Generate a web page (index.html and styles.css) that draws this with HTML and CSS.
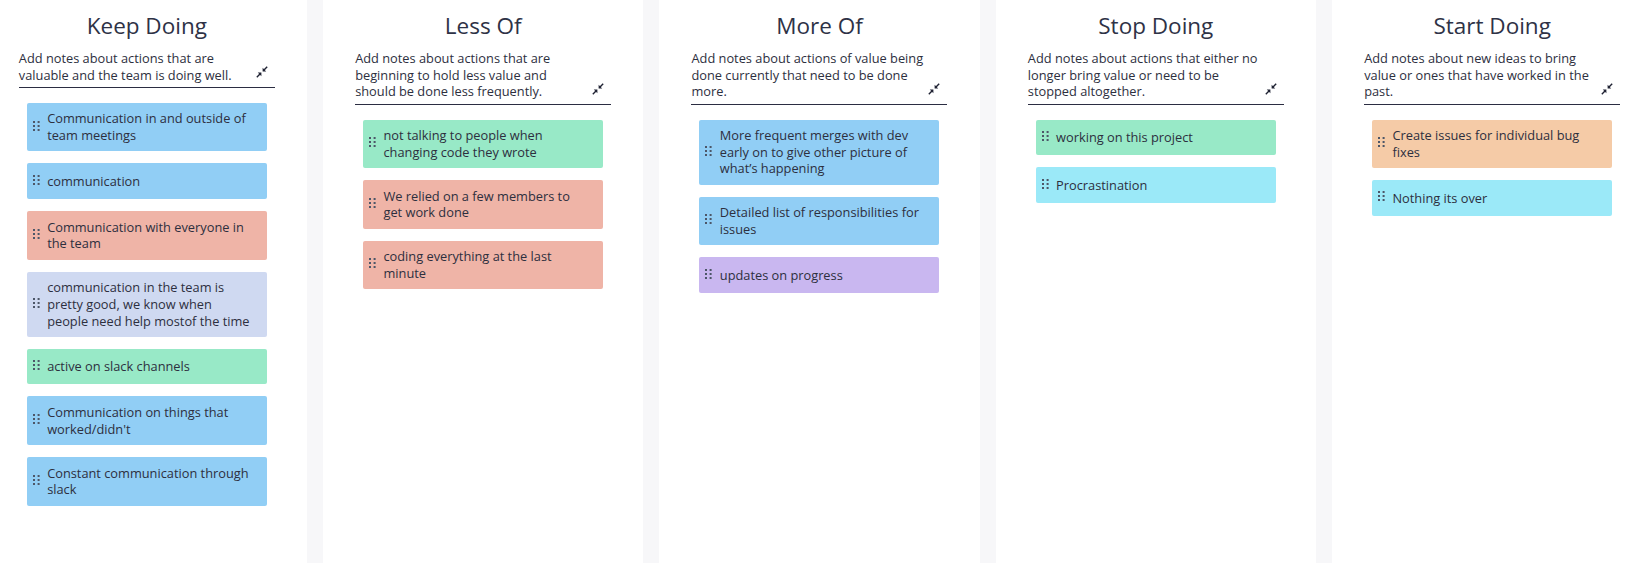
FILE: index.html
```html
<!DOCTYPE html>
<html lang="en">
<head>
<meta charset="utf-8">
<title>Retrospective board</title>
<link rel="stylesheet" href="styles.css">
</head>
<body>
<svg width="0" height="0" class="defs" aria-hidden="true">
  <defs>
    <symbol id="grip" viewBox="0 0 7 10">
      <rect x="0" y="0" width="2" height="2"/><rect x="4.6" y="0" width="2" height="2"/>
      <rect x="0" y="4" width="2" height="2"/><rect x="4.6" y="4" width="2" height="2"/>
      <rect x="0" y="8" width="2" height="2"/><rect x="4.6" y="8" width="2" height="2"/>
    </symbol>
    <symbol id="compress" viewBox="0 0 12 12">
      <path d="M11.2 0.8 L8 4" stroke="currentColor" stroke-width="1.4" fill="none"/>
      <path d="M6.6 1.8 L6.6 5.4 L10.2 5.4 Z" fill="currentColor"/>
      <path d="M0.8 11.2 L4 8" stroke="currentColor" stroke-width="1.4" fill="none"/>
      <path d="M5.4 6.6 L5.4 10.2 L1.8 6.6 Z" fill="currentColor"/>
    </symbol>
  </defs>
</svg>
<main class="board">
  <section class="column">
    <h2 class="title">Keep Doing</h2>
    <div class="desc">
      <p class="desc-text">Add notes about actions that are valuable and the team is doing well.</p>
      <svg class="collapse-icon"><use href="#compress"/></svg>
    </div>
    <div class="cards">
      <div class="card blue"><svg class="handle"><use href="#grip"/></svg><span class="card-text">Communication in and outside of team meetings</span></div>
      <div class="card blue"><svg class="handle"><use href="#grip"/></svg><span class="card-text">communication</span></div>
      <div class="card red"><svg class="handle"><use href="#grip"/></svg><span class="card-text">Communication with everyone in the team</span></div>
      <div class="card lavender"><svg class="handle"><use href="#grip"/></svg><span class="card-text">communication in the team is pretty good, we know when people need help mostof the time</span></div>
      <div class="card green"><svg class="handle"><use href="#grip"/></svg><span class="card-text">active on slack channels</span></div>
      <div class="card blue"><svg class="handle"><use href="#grip"/></svg><span class="card-text">Communication on things that worked/didn't</span></div>
      <div class="card blue"><svg class="handle"><use href="#grip"/></svg><span class="card-text">Constant communication through slack</span></div>
    </div>
  </section>
  <section class="column">
    <h2 class="title">Less Of</h2>
    <div class="desc">
      <p class="desc-text">Add notes about actions that are beginning to hold less value and should be done less frequently.</p>
      <svg class="collapse-icon"><use href="#compress"/></svg>
    </div>
    <div class="cards">
      <div class="card green"><svg class="handle"><use href="#grip"/></svg><span class="card-text">not talking to people when changing code they wrote</span></div>
      <div class="card red"><svg class="handle"><use href="#grip"/></svg><span class="card-text">We relied on a few members to get work done</span></div>
      <div class="card red"><svg class="handle"><use href="#grip"/></svg><span class="card-text">coding everything at the last minute</span></div>
    </div>
  </section>
  <section class="column">
    <h2 class="title">More Of</h2>
    <div class="desc">
      <p class="desc-text">Add notes about actions of value being done currently that need to be done more.</p>
      <svg class="collapse-icon"><use href="#compress"/></svg>
    </div>
    <div class="cards">
      <div class="card blue"><svg class="handle"><use href="#grip"/></svg><span class="card-text">More frequent merges with dev early on to give other picture of what’s happening</span></div>
      <div class="card blue"><svg class="handle"><use href="#grip"/></svg><span class="card-text">Detailed list of responsibilities for issues</span></div>
      <div class="card purple"><svg class="handle"><use href="#grip"/></svg><span class="card-text">updates on progress</span></div>
    </div>
  </section>
  <section class="column">
    <h2 class="title">Stop Doing</h2>
    <div class="desc">
      <p class="desc-text">Add notes about actions that either no longer bring value or need to be stopped altogether.</p>
      <svg class="collapse-icon"><use href="#compress"/></svg>
    </div>
    <div class="cards">
      <div class="card green"><svg class="handle"><use href="#grip"/></svg><span class="card-text">working on this project</span></div>
      <div class="card cyan"><svg class="handle"><use href="#grip"/></svg><span class="card-text">Procrastination</span></div>
    </div>
  </section>
  <section class="column">
    <h2 class="title">Start Doing</h2>
    <div class="desc">
      <p class="desc-text">Add notes about new ideas to bring value or ones that have worked in the past.</p>
      <svg class="collapse-icon"><use href="#compress"/></svg>
    </div>
    <div class="cards">
      <div class="card orange"><svg class="handle"><use href="#grip"/></svg><span class="card-text">Create issues for individual bug fixes</span></div>
      <div class="card cyan"><svg class="handle"><use href="#grip"/></svg><span class="card-text">Nothing its over</span></div>
    </div>
  </section>
</main>
</body>
</html>
```
FILE: styles.css
```css
html, body {
  margin: 0;
  padding: 0;
}
body {
  background: #f7f7f9;
  font-family: "Open Sans", "Noto Sans", sans-serif;
  color: #2d2f3e;
  overflow: hidden;
}
.defs {
  position: absolute;
  width: 0;
  height: 0;
}
.board {
  display: flex;
  gap: 16px;
  margin-left: -13.33px;
  height: 563px;
}
.column {
  flex: 0 0 320.33px;
  background: #ffffff;
  display: flex;
  flex-direction: column;
  align-items: center;
}
.title {
  margin: 0;
  padding-top: 10.25px;
  font-size: 22.5px;
  line-height: 32px;
  font-weight: 400;
  color: #2e3246;
}
.desc {
  width: 256px;
  margin-top: 7.75px;
  display: flex;
  align-items: flex-end;
  padding-bottom: 4px;
  border-bottom: 1px solid #2b2d42;
}
.desc-text {
  flex: 1;
  margin: 0;
  font-size: 12.8px;
  line-height: 16.67px;
}
.collapse-icon {
  flex: none;
  width: 12px;
  height: 12px;
  margin: 0 7px 5px 4.5px;
  color: #1f2233;
}
.cards {
  width: 240px;
  margin-top: 14.5px;
  display: flex;
  flex-direction: column;
  gap: 12px;
}
.card {
  display: flex;
  align-items: center;
  box-sizing: border-box;
  min-height: 35.7px;
  padding: 7.6px 14px 7.6px 6px;
  border-radius: 2px;
  font-size: 12.8px;
  line-height: 16.67px;
}
.handle {
  flex: none;
  width: 7px;
  height: 10px;
  margin: 0 7.3px 3px 0;
  fill: #4c5668;
}
.card-text {
  flex: 1;
}
.blue { background: #91cef5; }
.red { background: #efb4a7; }
.lavender { background: #cfd9f1; }
.green { background: #98e9c7; }
.purple { background: #c9b7f0; }
.cyan { background: #9be9f8; }
.orange { background: #f5cba7; }
```
